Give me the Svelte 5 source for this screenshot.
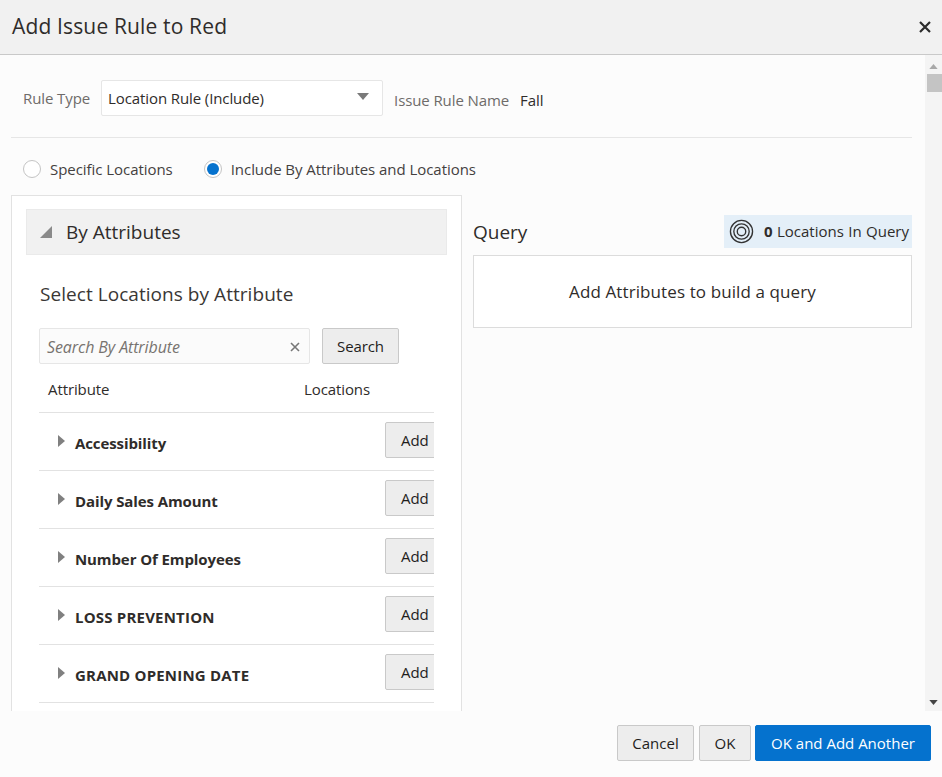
<script lang="ts">
  const attributes = [
    'Accessibility',
    'Daily Sales Amount',
    'Number Of Employees',
    'LOSS PREVENTION',
    'GRAND OPENING DATE'
  ];
</script>

<div class="dialog">
  <header class="dialog-header">
    <h1>Add Issue Rule to Red</h1>
    <button class="close" aria-label="Close">
      <svg viewBox="0 0 12 12" width="12" height="12" fill="none" stroke="currentColor" stroke-width="2.2">
        <path d="M1 1l10 10M11 1l-10 10" />
      </svg>
    </button>
  </header>

  <div class="dialog-body">
    <main class="content">
      <div class="rule-row">
        <span class="muted">Rule Type</span>
        <div class="select">
          <span>Location Rule (Include)</span>
          <svg viewBox="0 0 12 7" width="12" height="7"><path d="M0 0h12L6 7z" fill="#7a7a7a" /></svg>
        </div>
        <span class="muted name-label">Issue Rule Name</span>
        <span class="name-value">Fall</span>
      </div>

      <div class="radio-row">
        <label class="radio"><span class="dot"></span>Specific Locations</label>
        <label class="radio"><span class="dot on"></span>Include By Attributes and Locations</label>
      </div>

      <div class="columns">
        <section class="left">
          <div class="collapsible">
            <svg viewBox="0 0 12 12" width="12" height="12"><path d="M12 0v12H0z" fill="#8a8a8a" /></svg>
            <span>By Attributes</span>
          </div>
          <h2>Select Locations by Attribute</h2>
          <div class="search-row">
            <div class="search-input">
              <span>Search By Attribute</span>
              <svg viewBox="0 0 10 10" width="10" height="10" fill="none" stroke="#777" stroke-width="1.6">
                <path d="M1 1l8 8M9 1l-8 8" />
              </svg>
            </div>
            <button class="btn">Search</button>
          </div>
          <div class="table">
            <div class="table-head">
              <span>Attribute</span>
              <span class="locations">Locations</span>
            </div>
            {#each attributes as name}
              <div class="table-row">
                <svg viewBox="0 0 7 12" width="7" height="12"><path d="M0 0l7 6-7 6z" fill="#808080" /></svg>
                <strong class:caps={name === name.toUpperCase()}>{name}</strong>
                <button class="btn add">Add</button>
              </div>
            {/each}
          </div>
        </section>

        <section class="right">
          <div class="query-head">
            <span class="query-title">Query</span>
            <div class="count">
              <svg viewBox="0 0 26 26" width="25" height="25" fill="none" stroke="#333" stroke-width="1.4">
                <circle cx="13" cy="13" r="11.5" />
                <circle cx="13" cy="13" r="8" />
                <circle cx="13" cy="13" r="4.4" />
              </svg>
              <span class="count-text"><b>0</b> Locations In Query</span>
            </div>
          </div>
          <div class="query-box">Add Attributes to build a query</div>
        </section>
      </div>
    </main>

    <div class="scrollbar">
      <svg viewBox="0 0 10 6" width="9" height="5"><path d="M5 0l5 6H0z" fill="#a8a8a8" /></svg>
      <div class="thumb"></div>
      <svg class="down" viewBox="0 0 10 6" width="9" height="5"><path d="M0 0h10L5 6z" fill="#444" /></svg>
    </div>
  </div>

  <footer class="dialog-footer">
    <button class="btn foot">Cancel</button>
    <button class="btn foot ok">OK</button>
    <button class="btn foot primary">OK and Add Another</button>
  </footer>
</div>

<style>
  :global(body) {
    margin: 0;
    background: #fcfcfc;
  }

  .dialog {
    width: 942px;
    height: 777px;
    display: flex;
    flex-direction: column;
    overflow: hidden;
    font-family: "Open Sans", "Noto Sans", sans-serif;
    font-size: 15px;
    letter-spacing: -0.1px;
    color: #2f2c2a;
    background: #fcfcfc;
  }

  .dialog-header {
    flex: none;
    height: 54px;
    box-sizing: content-box;
    display: flex;
    align-items: center;
    justify-content: space-between;
    padding: 0 11px 0 12px;
    background: #f1f1f1;
    border-bottom: 1px solid #c9c9c9;
  }

  h1 {
    margin: 0 0 2px;
    font-size: 21px;
    font-weight: 400;
    letter-spacing: 0.15px;
  }

  .close {
    display: flex;
    padding: 0;
    border: none;
    background: none;
    color: #2b2b2b;
  }

  .dialog-body {
    flex: none;
    height: 656px;
    display: flex;
    overflow: hidden;
  }

  .content {
    width: 901px;
    margin-left: 11px;
    margin-right: 13px;
  }

  .rule-row {
    display: flex;
    align-items: center;
    height: 58px;
    margin-top: 25px;
    padding: 0 0 21px 12px;
    box-sizing: border-box;
    border-bottom: 1px solid #e6e6e6;
  }

  .muted {
    color: #6e6b69;
  }

  .select {
    width: 282px;
    height: 36px;
    margin-left: 11px;
    padding: 0 7px 0 6px;
    box-sizing: border-box;
    display: flex;
    align-items: center;
    justify-content: space-between;
    background: #fff;
    border: 1px solid #e6e6e6;
    border-radius: 2px;
  }

  .select svg {
    margin-right: 6px;
    margin-top: -4px;
  }

  .name-label {
    margin-left: 11px;
    padding-top: 4px;
  }

  .name-value {
    margin-left: 11px;
    padding-top: 4px;
  }

  .radio-row {
    display: flex;
    gap: 31px;
    align-items: center;
    height: 57px;
    box-sizing: border-box;
    padding: 5px 0 0 12px;
    letter-spacing: -0.05px;
    color: #44413f;
  }

  .radio {
    display: flex;
    align-items: center;
    gap: 9px;
  }

  .dot {
    width: 18px;
    height: 18px;
    box-sizing: border-box;
    border: 1px solid #c4c4c4;
    border-radius: 50%;
    background: #fff;
    display: flex;
    align-items: center;
    justify-content: center;
  }

  .dot.on::after {
    content: "";
    width: 12px;
    height: 12px;
    border-radius: 50%;
    background: #0572ce;
  }

  .columns {
    display: flex;
    gap: 11px;
    align-items: flex-start;
  }

  .left {
    width: 451px;
    box-sizing: border-box;
    height: 540px;
    padding: 13px 14px 0;
    border: 1px solid #e2e2e2;
    background: #fff;
  }

  .collapsible {
    height: 46px;
    box-sizing: border-box;
    display: flex;
    align-items: center;
    gap: 14px;
    padding-left: 13px;
    background: #f1f1f1;
    border: 1px solid #eaeaea;
    font-size: 19px;
    letter-spacing: 0;
  }

  h2 {
    margin: 26px 0 0 14px;
    font-size: 19px;
    line-height: 26px;
    font-weight: 400;
    letter-spacing: 0.05px;
    color: #3a3735;
  }

  .search-row {
    display: flex;
    gap: 12px;
    margin: 21px 0 0 13px;
  }

  .search-input {
    width: 271px;
    height: 36px;
    box-sizing: border-box;
    display: flex;
    align-items: center;
    justify-content: space-between;
    padding: 1px 9px 0 7px;
    background: #fbfbfb;
    border: 1px solid #e6e6e6;
    border-radius: 2px;
    font-size: 16px;
    font-style: italic;
    color: #77736f;
  }

  .btn {
    height: 36px;
    padding: 0;
    box-sizing: border-box;
    background: #ededed;
    border: 1px solid #c9c9c9;
    border-radius: 2px;
    font: inherit;
    letter-spacing: inherit;
    color: #1f1d1c;
  }

  .search-row .btn {
    width: 77px;
  }

  .table {
    width: 395px;
    margin-left: 13px;
    overflow: hidden;
  }

  .table-head {
    height: 49px;
    box-sizing: border-box;
    display: flex;
    align-items: center;
    padding: 1px 0 0 9px;
    border-bottom: 1px solid #e2e2e2;
  }

  .locations {
    margin-left: auto;
    margin-right: 64px;
  }

  .table-row {
    height: 58px;
    box-sizing: border-box;
    display: flex;
    align-items: center;
    padding-left: 19px;
    border-bottom: 1px solid #e2e2e2;
  }

  .table-row svg {
    margin-top: -2px;
  }

  .table-row strong {
    margin-left: 10px;
    font-weight: 700;
    padding-top: 3px;
  }

  .table-row strong.caps {
    letter-spacing: 0.2px;
  }

  .add {
    width: 56px;
    margin-left: auto;
    margin-right: -7px;
    padding-left: 15px;
    text-align: left;
    margin-top: -4px;
  }

  .right {
    flex: 1;
    margin-top: 20px;
  }

  .query-head {
    display: flex;
    align-items: center;
    justify-content: space-between;
    height: 33px;
    margin-bottom: 7px;
  }

  .query-title {
    font-size: 19px;
    letter-spacing: 0;
  }

  .count {
    width: 188px;
    height: 33px;
    box-sizing: border-box;
    display: flex;
    align-items: center;
    gap: 10px;
    padding-left: 5px;
    background: #e4eff8;
  }

  .count-text {
    margin-top: -2px;
    letter-spacing: 0;
    word-spacing: 0.5px;
  }

  .query-box {
    height: 73px;
    box-sizing: border-box;
    display: flex;
    align-items: center;
    justify-content: center;
    background: #fff;
    border: 1px solid #dcdcdc;
    font-size: 17px;
    letter-spacing: 0.1px;
  }

  .scrollbar {
    width: 17px;
    position: relative;
    display: flex;
    flex-direction: column;
    align-items: center;
    padding-top: 9px;
    box-sizing: border-box;
    background: #f4f4f4;
  }

  .thumb {
    width: 15px;
    height: 18px;
    margin-top: 5px;
    align-self: flex-end;
    background: #c4c4c4;
  }

  .down {
    margin-top: auto;
    margin-bottom: 6px;
  }

  .dialog-footer {
    flex: 1;
    display: flex;
    align-items: flex-start;
    justify-content: flex-end;
    gap: 5px;
    padding: 14px 11px 0 0;
    letter-spacing: 0;
  }

  .foot {
    height: 36px;
    width: 77px;
  }

  .foot.ok {
    width: 52px;
  }

  .foot.primary {
    width: 176px;
    margin-left: -1px;
    background: #0572ce;
    border-color: #0572ce;
    color: #fff;
  }
</style>
